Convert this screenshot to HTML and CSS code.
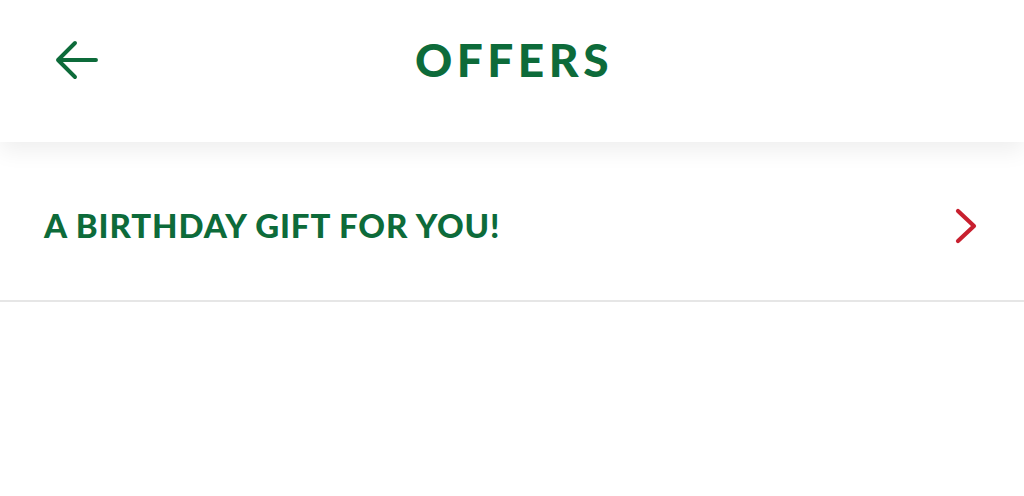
FILE: index.html
```html
<!DOCTYPE html>
<html>
<head>
<meta charset="utf-8">
<link rel="stylesheet" href="styles.css">
</head>
<body>
<header class="topbar">
  <button class="back" aria-label="Back">
    <svg width="44" height="40" viewBox="0 0 44 40"><path d="M41 20H3M20 3L3 20l17 17" fill="none" stroke="#0d6b3a" stroke-width="3.9" stroke-linecap="round" stroke-linejoin="round"/></svg>
  </button>
  <h1 class="title">OFFERS</h1>
</header>
<main class="list">
  <a class="row" href="#">
    <span class="row-label">A BIRTHDAY GIFT FOR YOU!</span>
    <svg class="chev" width="24" height="36" viewBox="0 0 24 36"><path d="M4 3l16 15L4 33" fill="none" stroke="#c8202f" stroke-width="4.2" stroke-linecap="round" stroke-linejoin="round"/></svg>
  </a>
</main>
</body>
</html>
```
FILE: styles.css
```css
html, body { margin: 0; padding: 0; background: #fff; }
body { font-family: "Lato", "Liberation Sans", sans-serif; width: 1024px; height: 496px; overflow: hidden; }
.topbar {
  position: relative;
  height: 142px;
  display: flex;
  align-items: center;
  justify-content: center;
  background: #fff;
  box-shadow: 0 8px 22px rgba(0,0,0,0.07);
  z-index: 1;
}
.back {
  position: absolute;
  left: 55px;
  top: 40px;
  border: 0;
  background: none;
  padding: 0;
  width: 44px;
  height: 40px;
}
.back svg { display: block; }
.title {
  margin: 0;
  font-weight: 900;
  font-size: 46px;
  letter-spacing: 4.5px;
  color: #0d6b3a;
  padding-left: 4px;
  line-height: 1;
  margin-top: -22px;
}
.row {
  display: flex;
  align-items: center;
  justify-content: space-between;
  height: 158px;
  padding: 0 44px 0 44px;
  border-bottom: 2px solid #e6e6e6;
  text-decoration: none;
  background: #fff;
}
.row-label {
  font-weight: 900;
  font-size: 33px;
  letter-spacing: 0.9px;
  color: #0d6b3a;
  margin-top: 8px;
}
.chev { display: block; margin-top: 10px; margin-right: 2px; }
```
